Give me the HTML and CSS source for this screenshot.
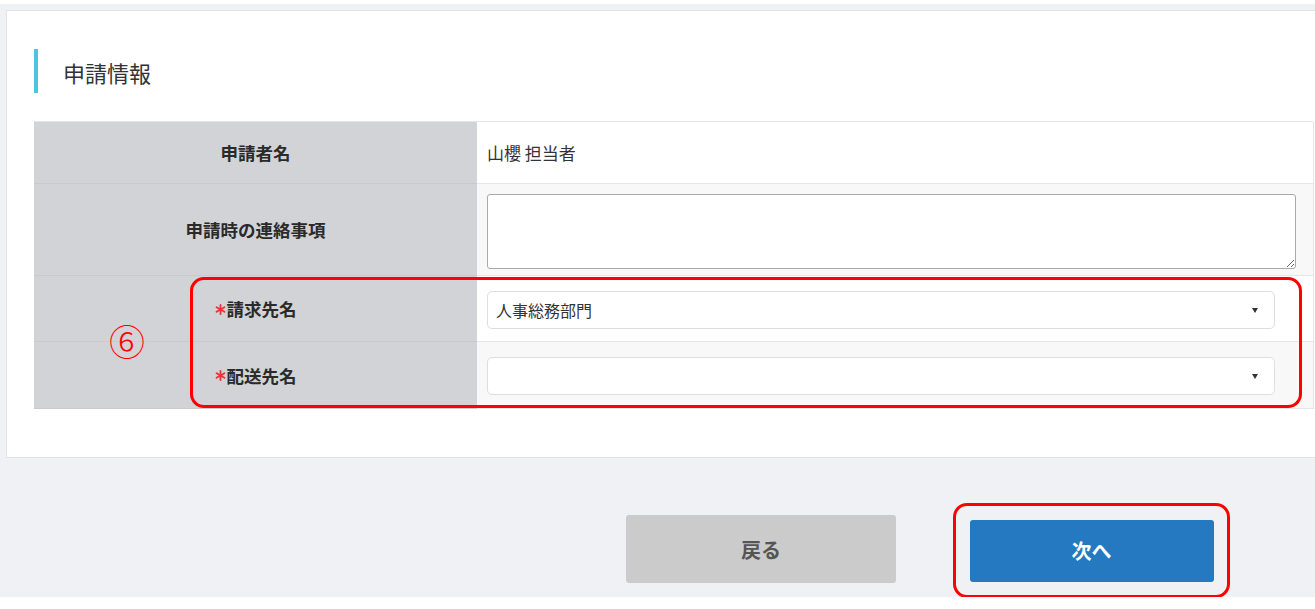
FILE: index.html
```html
<!DOCTYPE html>
<html lang="ja">
<head>
<meta charset="utf-8">
<title>申請情報</title>
<link rel="stylesheet" href="styles.css">
</head>
<body>
<div class="topstrip"></div>
<div class="main">
  <section class="card">
    <h2 class="heading">申請情報</h2>
    <div class="table">
      <div class="label">申請者名</div>
      <div class="value odd"><span class="text">山櫻 担当者</span></div>
      <div class="label">申請時の連絡事項</div>
      <div class="value even"><textarea class="textarea"></textarea></div>
      <div class="label"><svg class="req" viewBox="0 0 12 12" width="11" height="11"><g stroke="#e8333a" stroke-width="2" stroke-linecap="round"><line x1="6" y1="1" x2="6" y2="11"/><line x1="1.7" y1="3.5" x2="10.3" y2="8.5"/><line x1="1.7" y1="8.5" x2="10.3" y2="3.5"/></g></svg>請求先名</div>
      <div class="value odd sel-row"><div class="select"><span>人事総務部門</span><span class="caret"></span></div></div>
      <div class="label"><svg class="req" viewBox="0 0 12 12" width="11" height="11"><g stroke="#e8333a" stroke-width="2" stroke-linecap="round"><line x1="6" y1="1" x2="6" y2="11"/><line x1="1.7" y1="3.5" x2="10.3" y2="8.5"/><line x1="1.7" y1="8.5" x2="10.3" y2="3.5"/></g></svg>配送先名</div>
      <div class="value even sel-row"><div class="select"><span></span><span class="caret"></span></div></div>
      <div class="annot-frame"></div>
      <div class="annot-num">⑥</div>
    </div>
  </section>
  <div class="actions">
    <button class="btn back">戻る</button>
    <div class="btn-frame"><button class="btn next">次へ</button></div>
  </div>
</div>
</body>
</html>
```

FILE: styles.css
```css
html, body {
  margin: 0;
  padding: 0;
  background: #ffffff;
  overflow: hidden;
  font-family: "Noto Sans CJK JP", "Noto Sans", sans-serif;
  color: #333;
}
.topstrip {
  height: 4px;
  background: #ffffff;
}
.main {
  background: #f0f1f5;
  padding: 6px 0 0 6px;
  height: 593px;
  box-sizing: border-box;
}
.card {
  width: 1330px;
  background: #ffffff;
  border: 1px solid #e2e3e7;
  padding: 38px 0 48px 27px;
  box-sizing: border-box;
  height: 448px;
}
.heading {
  margin: 0;
  height: 44px;
  border-left: 4px solid #4fc3e0;
  padding-left: 25px;
  font-size: 22px;
  font-weight: 400;
  line-height: 46px;
  color: #333;
}
.table {
  position: relative;
  margin-top: 28px;
  width: 1279px;
  display: grid;
  grid-template-columns: 443px 1fr;
  grid-template-rows: 62px 92px 66px 67px;
  border-top: 1px solid #e4e4e4;
  box-sizing: border-box;
}
.label {
  background: #d1d3d6;
  display: flex;
  align-items: center;
  justify-content: center;
  font-size: 17.5px;
  font-weight: 700;
  color: #2a2a2a;
  border-bottom: 1px solid #c8cacd;
}
.label:nth-last-of-type(1) { border-bottom: none; }
.value {
  border-bottom: 1px solid #e6e6e6;
  border-right: 1px solid #e6e6e6;
  display: flex;
  align-items: center;
  padding: 0 17px 0 10px;
  box-sizing: border-box;
}
.odd { background: #ffffff; }
.even { background: #f8f8f8; }
.text {
  font-size: 17px;
  color: #333;
}
.textarea {
  width: 809px;
  height: 75px;
  margin: 0;
  box-sizing: border-box;
  border: 1px solid #a9a9a9;
  border-radius: 3px;
  background: #fff;
  align-self: flex-start;
  margin-top: 10px;
}
.sel-row {
  align-items: flex-start;
  padding-top: 15px;
}
.select {
  width: 788px;
  height: 38px;
  box-sizing: border-box;
  border: 1px solid #dedede;
  border-radius: 5px;
  background: #fff;
  display: flex;
  align-items: center;
  justify-content: space-between;
  padding: 0 16px 0 8px;
  font-size: 16px;
  color: #333;
}
.caret {
  width: 0;
  height: 0;
  border-left: 3.5px solid transparent;
  border-right: 3.5px solid transparent;
  border-top: 5px solid #333;
}
.req {
  display: block;
  margin-right: 1px;
  margin-top: 1px;
}
.annot-frame {
  position: absolute;
  left: 156px;
  top: 155px;
  width: 1112px;
  height: 131px;
  border: 3px solid #ff0000;
  border-radius: 14px;
  box-sizing: border-box;
}
.annot-num {
  position: absolute;
  left: 75px;
  top: 197px;
  font-size: 36px;
  font-weight: 300;
  line-height: 42px;
  color: #ff0000;
}
.actions {
  display: flex;
  align-items: flex-start;
  margin-top: 45px;
  padding-left: 620px;
}
.btn {
  border: none;
  border-radius: 3px;
  font-family: "Noto Sans CJK JP", "Noto Sans", sans-serif;
  font-size: 20px;
  font-weight: 700;
  padding: 0;
}
.back {
  width: 270px;
  height: 68px;
  margin-top: 12px;
  background: #cbcbcb;
  color: #555;
}
.btn-frame {
  margin-left: 57px;
  width: 277px;
  height: 95px;
  border: 3px solid #ff0000;
  border-radius: 14px;
  box-sizing: border-box;
  display: flex;
  align-items: center;
  justify-content: center;
}
.next {
  width: 244px;
  height: 62px;
  background: #2479c1;
  color: #ffffff;
}
```
